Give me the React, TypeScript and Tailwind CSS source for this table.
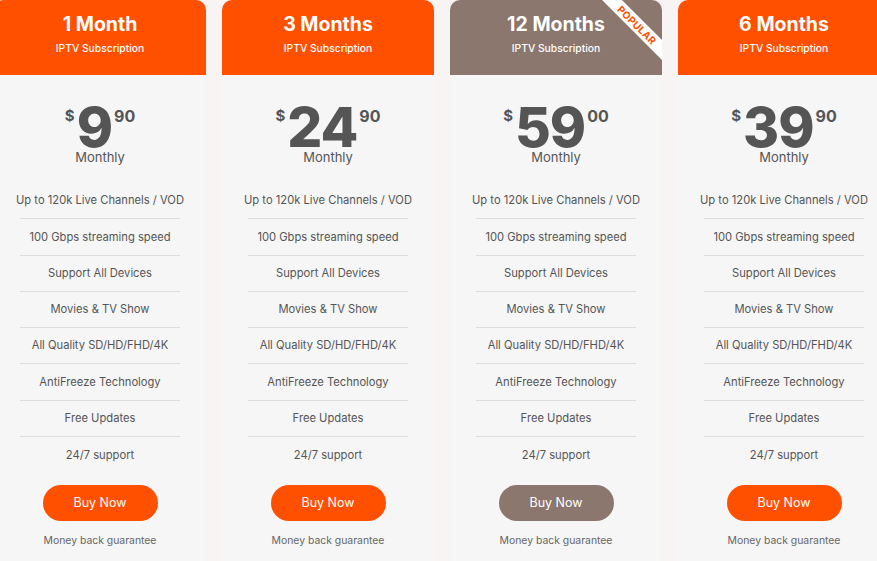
import React from "react";

type Plan = {
  title: string;
  price: string;
  cents: string;
  popular?: boolean;
};

const plans: Plan[] = [
  { title: "1 Month", price: "9", cents: "90" },
  { title: "3 Months", price: "24", cents: "90" },
  { title: "12 Months", price: "59", cents: "00", popular: true },
  { title: "6 Months", price: "39", cents: "90" },
];

const features = [
  "Up to 120k Live Channels / VOD",
  "100 Gbps streaming speed",
  "Support All Devices",
  "Movies & TV Show",
  "All Quality SD/HD/FHD/4K",
  "AntiFreeze Technology",
  "Free Updates",
  "24/7 support",
];

function PlanCard({ plan }: { plan: Plan }) {
  const accent = plan.popular ? "bg-[#8b776d]" : "bg-[#ff5000]";

  return (
    <div className="w-[212px] shrink-0 rounded-t-[10px] bg-[#f6f6f6] flex flex-col items-center">
      {/* Cabecera */}
      <div className={`relative w-full h-[75px] overflow-hidden rounded-t-[10px] ${accent} text-white text-center pt-[10px]`}>
        <h3 className="text-[19.5px] leading-[28px] font-bold">{plan.title}</h3>
        <p className="text-[10.3px] leading-[16px] font-medium mt-[2px]">IPTV Subscription</p>
        {plan.popular && (
          <div className="absolute top-[18px] right-[-35px] w-[120px] h-[14px] rotate-45 bg-white text-[#ff5000] text-[10px] leading-[14px] font-bold text-center tracking-[0.3px]">
            POPULAR
          </div>
        )}
      </div>

      {/* Precio */}
      <div className="flex items-start justify-center text-[#555555] pt-[25px]">
        <span className="text-[15px] leading-none font-bold mt-[8px]">$</span>
        <span className="text-[55px] leading-none font-extrabold tracking-[-1px] ml-[2px]">{plan.price}</span>
        <span className="text-[16px] leading-none font-bold mt-[8px] ml-[2px]">{plan.cents}</span>
      </div>
      <p className="text-[13px] leading-[20px] text-[#555555] -mt-[8px]">Monthly</p>

      {/* Características */}
      <ul className="w-full mt-[16px]">
        {features.map((f, i) => (
          <li
            key={i}
            className={`mx-[26px] h-[36.3px] flex items-center justify-center text-[11.2px] text-[#555555] whitespace-nowrap ${
              i < features.length - 1 ? "border-b border-[#dddddd]" : ""
            }`}
          >
            {f}
          </li>
        ))}
      </ul>

      <button className={`mt-[12px] w-[115px] h-9 rounded-full ${accent} text-white text-[12.5px]`}>
        Buy Now
      </button>
      <p className="mt-[12px] text-[10.4px] leading-[16px] text-[#666666] pb-6">Money back guarantee</p>
    </div>
  );
}

export default function App() {
  return (
    <div
      className="w-[877px] h-[561px] overflow-hidden bg-[#f8f4f4]"
      style={{ fontFamily: "Inter, 'Noto Sans', sans-serif" }}
    >
      <div className="flex gap-4 ml-[-6px]">
        {plans.map((p) => (
          <PlanCard key={p.title} plan={p} />
        ))}
      </div>
    </div>
  );
}
